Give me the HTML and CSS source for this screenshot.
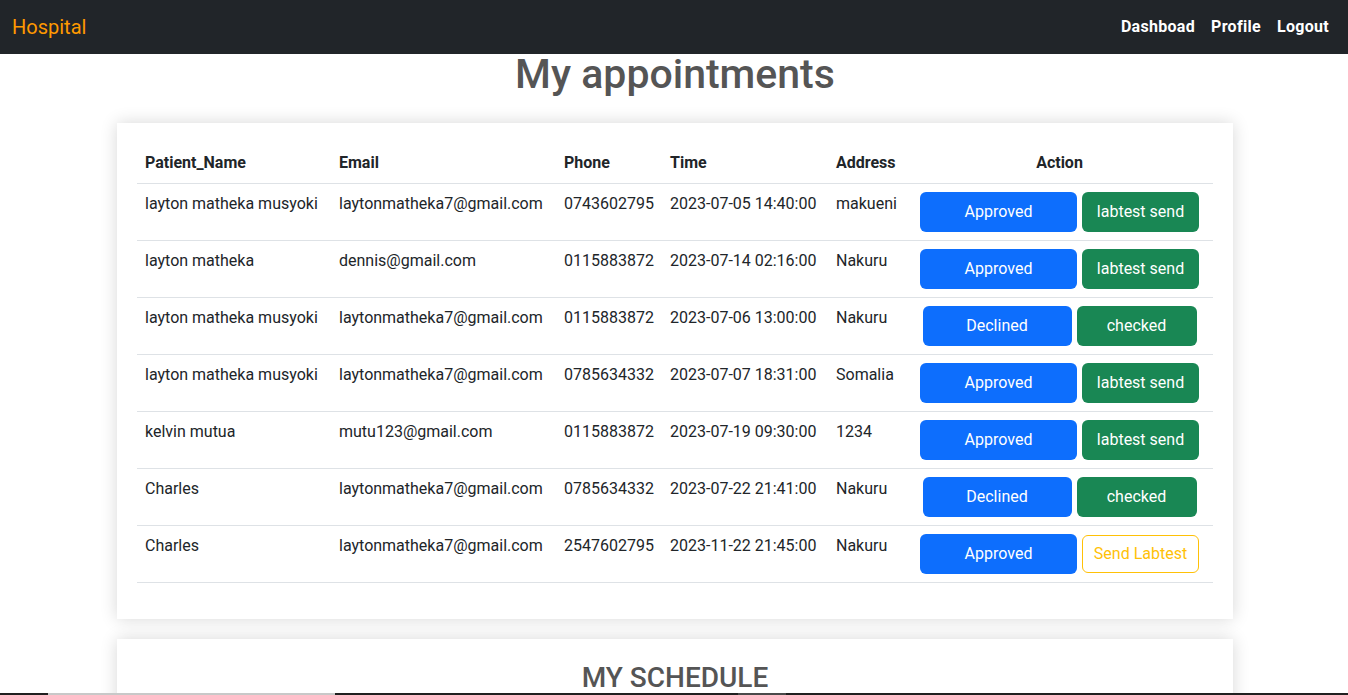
FILE: index.html
```html
<!DOCTYPE html>
<html lang="en">
<head>
<meta charset="utf-8">
<title>Hospital</title>
<link rel="stylesheet" href="styles.css">
</head>
<body>
<nav class="navbar">
  <a class="brand" href="#">Hospital</a>
  <ul class="nav">
    <li><a href="#">Dashboad</a></li>
    <li><a href="#">Profile</a></li>
    <li><a href="#">Logout</a></li>
  </ul>
</nav>
<main class="container">
  <h1 class="page-title">My appointments</h1>
  <section class="card">
    <table class="table">
      <colgroup>
        <col class="c-name"><col class="c-email"><col class="c-phone"><col class="c-time"><col class="c-addr"><col class="c-action">
      </colgroup>
      <thead>
        <tr><th>Patient_Name</th><th>Email</th><th>Phone</th><th>Time</th><th>Address</th><th class="center">Action</th></tr>
      </thead>
      <tbody>
        <tr><td>layton matheka musyoki</td><td>laytonmatheka7@gmail.com</td><td>0743602795</td><td>2023-07-05 14:40:00</td><td>makueni</td>
          <td><div class="actions"><a class="btn btn-approved">Approved</a><a class="btn btn-labsend">labtest send</a></div></td></tr>
        <tr><td>layton matheka</td><td>dennis@gmail.com</td><td>0115883872</td><td>2023-07-14 02:16:00</td><td>Nakuru</td>
          <td><div class="actions"><a class="btn btn-approved">Approved</a><a class="btn btn-labsend">labtest send</a></div></td></tr>
        <tr><td>layton matheka musyoki</td><td>laytonmatheka7@gmail.com</td><td>0115883872</td><td>2023-07-06 13:00:00</td><td>Nakuru</td>
          <td><div class="actions"><a class="btn btn-declined">Declined</a><a class="btn btn-checked">checked</a></div></td></tr>
        <tr><td>layton matheka musyoki</td><td>laytonmatheka7@gmail.com</td><td>0785634332</td><td>2023-07-07 18:31:00</td><td>Somalia</td>
          <td><div class="actions"><a class="btn btn-approved">Approved</a><a class="btn btn-labsend">labtest send</a></div></td></tr>
        <tr><td>kelvin mutua</td><td>mutu123@gmail.com</td><td>0115883872</td><td>2023-07-19 09:30:00</td><td>1234</td>
          <td><div class="actions"><a class="btn btn-approved">Approved</a><a class="btn btn-labsend">labtest send</a></div></td></tr>
        <tr><td>Charles</td><td>laytonmatheka7@gmail.com</td><td>0785634332</td><td>2023-07-22 21:41:00</td><td>Nakuru</td>
          <td><div class="actions"><a class="btn btn-declined">Declined</a><a class="btn btn-checked">checked</a></div></td></tr>
        <tr><td>Charles</td><td>laytonmatheka7@gmail.com</td><td>2547602795</td><td>2023-11-22 21:45:00</td><td>Nakuru</td>
          <td><div class="actions"><a class="btn btn-approved">Approved</a><a class="btn btn-outline-warning">Send Labtest</a></div></td></tr>
      </tbody>
    </table>
  </section>
  <section class="card schedule">
    <h2 class="section-title">MY SCHEDULE</h2>
  </section>
</main>
<div class="taskbar"><span class="tb-seg tb-light"></span><span class="tb-seg tb-mid"></span></div>
</body>
</html>
```

FILE: styles.css
```css
* { box-sizing: border-box; }
html, body { margin: 0; padding: 0; }
body {
  font-family: Roboto, "Noto Sans", sans-serif;
  font-size: 16px;
  line-height: 1.5;
  color: #212529;
  background: #fff;
}
a { text-decoration: none; }

.navbar {
  height: 54px;
  background: #212529;
  display: flex;
  align-items: center;
  justify-content: space-between;
  padding: 0 12px;
}
.brand {
  color: #ff9900;
  font-size: 20px;
}
.nav {
  list-style: none;
  margin: 0;
  padding: 0 7px 0 0;
  display: flex;
  gap: 16px;
}
.nav a {
  color: #fff;
  font-weight: 700;
  letter-spacing: 0.3px;
}

.container {
  max-width: 1140px;
  margin: 0 auto;
  padding: 0 11px 0 13px;
}
.page-title {
  margin: -4px 0 25px;
  text-align: center;
  font-size: 41px;
  font-weight: 500;
  line-height: 48px;
  color: #555;
}
.card {
  background: #fff;
  box-shadow: 0 0 16px rgba(0, 0, 0, 0.16);
  padding: 20px;
  margin-bottom: 20px;
}
.table {
  width: 100%;
  border-collapse: collapse;
  vertical-align: top;
  margin-bottom: 16px;
}
.c-name { width: 194px; }
.c-email { width: 225px; }
.c-phone { width: 106px; }
.c-time { width: 166px; }
.c-addr { width: 78px; }
.table th, .table td {
  padding: 8px;
  border-bottom: 1px solid #dee2e6;
  text-align: left;
  vertical-align: top;
  white-space: nowrap;
}
.table th { font-weight: 700; }
.table th.center { text-align: center; }

.actions {
  display: flex;
  justify-content: center;
  align-items: center;
  gap: 5px;
}
.btn {
  display: inline-flex;
  align-items: center;
  justify-content: center;
  height: 40px;
  border-radius: 6px;
  color: #fff;
  font-size: 16px;
  border: 1px solid transparent;
}
.btn-approved { width: 157px; background: #0d6efd; }
.btn-declined { width: 149px; background: #0d6efd; }
.btn-labsend { width: 117px; background: #198754; }
.btn-checked { width: 120px; background: #198754; }
.btn-outline-warning {
  width: 117px;
  height: 38px;
  background: #fff;
  color: #ffc107;
  border-color: #ffc107;
}

.schedule { padding-top: 18px; }
.section-title {
  margin: 0;
  text-align: center;
  font-size: 28px;
  font-weight: 500;
  color: #555;
}

.taskbar {
  position: fixed;
  left: 0;
  right: 0;
  bottom: 0;
  height: 2px;
  background: #202020;
}
.tb-seg {
  position: absolute;
  top: 0;
  height: 2px;
}
.tb-light { left: 48px; width: 287px; background: #c8c8c8; }
.tb-mid { left: 738px; width: 48px; background: #4a4a4a; }
```
